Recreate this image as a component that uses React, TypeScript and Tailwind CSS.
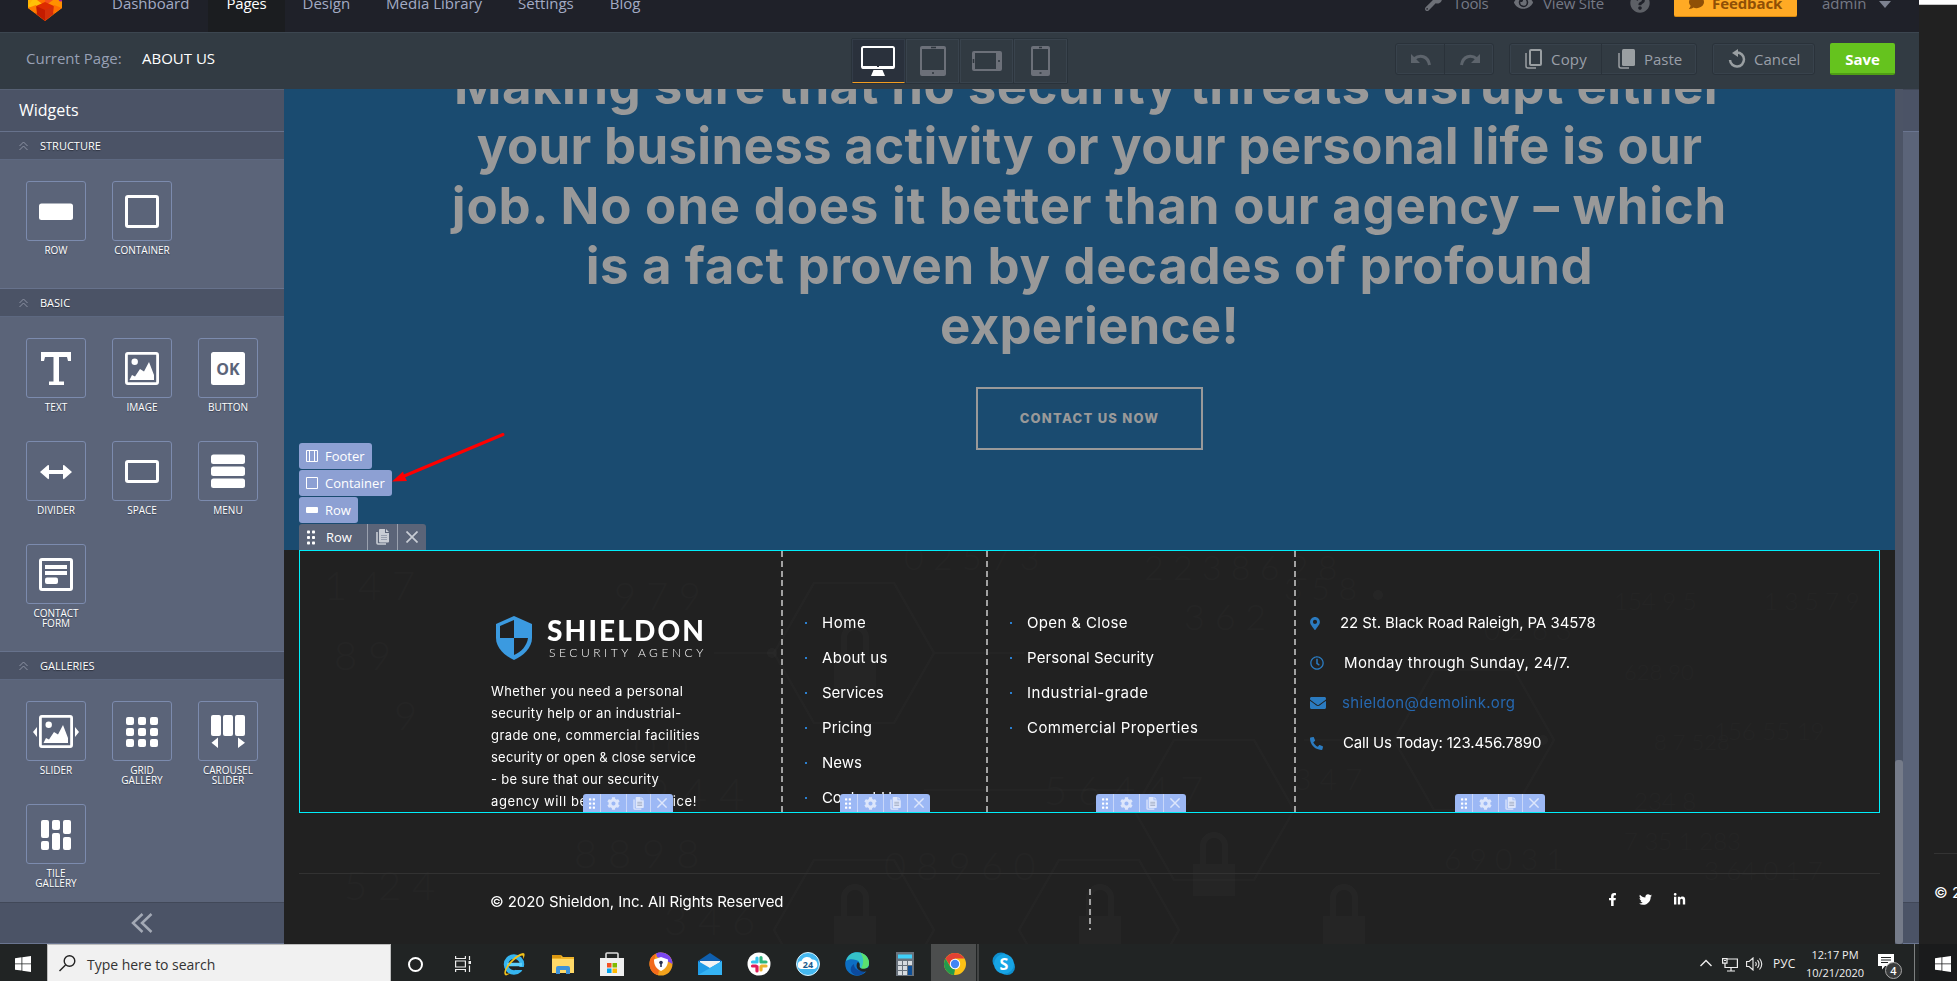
import React from "react";
import {
  FaMapMarkerAlt, FaRegClock, FaEnvelope, FaPhone, FaFacebookF, FaTwitter, FaLinkedinIn,
  FaCog, FaWrench, FaEye, FaComment, FaQuestionCircle,
} from "react-icons/fa";

const OPEN = "font-['Open_Sans','Noto_Sans',sans-serif]";
const GEO = "font-['Inter','Open_Sans',sans-serif]";

/* ---------- top bars ---------- */

function Logo() {
  return (
    <svg className="block" width="34" height="36" viewBox="0 0 34 36">
      <path d="M0 0h34v22L17 35 0 22z" fill="#ff9800" />
      <path d="M0 0h9v17L0 22z" fill="#ffb300" />
      <path d="M34 0h-9v17l9 5z" fill="#ff8f00" />
      <path d="M9 8l8 8-8 8-9-4z" fill="#ffc107" />
      <path d="M25 8l-8 8 8 8 9-4z" fill="#ff9100" />
      <path d="M9 14l8 6v-9z" fill="#ff6d00" />
      <path d="M25 14l-8 6v-9z" fill="#f4511e" />
      <path d="M8 20l9-4 9 4-9 15z" fill="#dd2c00" />
      <path d="M8 20l9 4v11L7 27z" fill="#c41c00" />
      <path d="M26 20l-9 4v11l10-8z" fill="#d32f0a" />
      <path d="M0 22l8-3 1 9z" fill="#ff7a00" />
      <path d="M34 22l-8-3-1 9z" fill="#ff6f00" />
      <circle cx="33" cy="13" r="2.5" fill="#a11d8f" />
    </svg>
  );
}

function Nav() {
  const tab = "flex h-full items-center px-[18px] pb-[3px]";
  return (
    <header className={`h-8 overflow-hidden bg-[#1f2129] text-[15px] leading-5 ${OPEN}`}>
      <div className="-mt-6 flex h-14 items-center text-[#a3abc4]">
        <div className="w-[94px] pl-7"><Logo /></div>
        <span className={tab}>Dashboard</span>
        <span className={`${tab} ml-[1px] bg-[#1b1d20] tracking-[-0.2px] text-white`}>Pages</span>
        <span className={tab}>Design</span>
        <span className={tab}>Media Library</span>
        <span className={tab}>Settings</span>
        <span className={tab}>Blog</span>
        <div className="ml-auto flex h-full items-center pr-[28px] pb-[3px] text-[#757985]">
          <FaWrench className="mr-[11px] h-[17px] w-[17px] text-[#6c6f76]" />
          <span className="w-[61px] tracking-[-0.4px]">Tools</span>
          <FaEye className="mr-[10px] h-[19px] w-[19px] text-[#6c6f76]" />
          <span className="w-[87px] tracking-[-0.16px]">View Site</span>
          <FaQuestionCircle className="mr-6 h-5 w-5 text-[#5d6066]" />
          <span className="mt-px mr-[25px] flex h-[27px] w-[123px] items-center rounded-[2px] border-b border-[#d98a10] bg-[#ffaa24] pl-[15px] font-bold tracking-[-0.1px] text-[#8f4f06]">
            <FaComment className="mr-2 h-[15px] w-[15px]" />Feedback
          </span>
          <span className="w-[57px]">admin</span>
          <span className="mt-1 h-0 w-0 border-x-[6px] border-t-[7px] border-x-transparent border-t-[#7d8290]" />
        </div>
      </div>
    </header>
  );
}

function Devices() {
  const cell = "flex h-[44px] w-[53px] items-center justify-center border border-[#39434d]";
  return (
    <div className="mt-[3px] flex w-[217px] gap-px rounded-[2px] border border-[#29323a] bg-[#2b333b]">
      <div className="flex h-[44px] w-[53px] items-center justify-center border border-b border-[#333c48] border-b-[#f39c1f] bg-[#2a313c]">
        <svg className="mr-px" width="34" height="32" viewBox="0 0 34 32">
          <rect x="1" y="2" width="32" height="21" rx="1.5" fill="none" stroke="#fff" strokeWidth="2" />
          <path d="M1 21h32v2.500H1z" fill="#fff" /><path d="M12.500 25h9l2.500 6H10z" fill="#fff" />
          <rect x="16" y="21" width="2" height="1" fill="#2a313c" />
        </svg>
      </div>
      <div className={`${cell} bg-[#313a42]`}>
        <svg width="26" height="30" viewBox="0 0 26 30">
          <path fillRule="evenodd" fill="#6c7079" d="M2 0h22a2 2 0 012 2v26a2 2 0 01-2 2H2a2 2 0 01-2-2V2a2 2 0 012-2zm0 3v21h22V3z" />
          <path d="M11 1.500h5M12 27h2" stroke="#2d353d" strokeWidth="1.500" />
        </svg>
      </div>
      <div className={`${cell} bg-[#313a42]`}>
        <svg width="30" height="20" viewBox="0 0 30 20">
          <path fillRule="evenodd" fill="#6c7079" d="M2 0h26a2 2 0 012 2v16a2 2 0 01-2 2H2a2 2 0 01-2-2V2a2 2 0 012-2zm1 2v16h21V2z" />
          <path d="M1.500 8v4M27 9v2" stroke="#2d353d" strokeWidth="1.500" />
        </svg>
      </div>
      <div className={`${cell} bg-[#313a42]`}>
        <svg width="19" height="30" viewBox="0 0 19 30">
          <path fillRule="evenodd" fill="#6c7079" d="M2 0h15a2 2 0 012 2v26a2 2 0 01-2 2H2a2 2 0 01-2-2V2a2 2 0 012-2zm0 3v21h15V3z" />
          <path d="M8 1.500h3M8.500 27h2" stroke="#2d353d" strokeWidth="1.500" />
        </svg>
      </div>
    </div>
  );
}

function Toolbar() {
  const group = "flex h-[32px] items-center rounded-[3px] border border-[#2a323a] shadow-[inset_0_0_0_1px_#38424c]";
  return (
    <div className={`grid h-[57px] grid-cols-[851px_217px_851px] items-center border-t border-[#3c4650] bg-[#323b43] pb-[4px] text-[15px] leading-5 text-[#9a9fa8] ${OPEN}`}>
      <div className="flex pl-[26px] pb-[2px]">
        <span className="w-[116px] text-[#98a0b5]">Current Page:</span>
        <span className="text-white">ABOUT US</span>
      </div>
      <Devices />
      <div className="flex items-center justify-end pr-6">
        <div className={`${group} mr-[15px] w-[99px]`}>
          <span className="flex h-full w-[49px] items-center justify-center border-r border-[#2a323a]">
            <svg className="ml-[3px]" width="20" height="13" viewBox="0 0 20 13"><path d="M3 6C9 1 17 3 18.500 12" fill="none" stroke="#5d646c" strokeWidth="3" /><path d="M0 1v9h9z" fill="#5d646c" /></svg>
          </span>
          <span className="flex h-full w-[49px] items-center justify-center">
            <svg className="ml-[2px]" width="20" height="13" viewBox="0 0 20 13"><path d="M17 6C11 1 3 3 1.500 12" fill="none" stroke="#5d646c" strokeWidth="3" /><path d="M20 1v9h-9z" fill="#5d646c" /></svg>
          </span>
        </div>
        <div className={`${group} mr-[15px] w-[188px]`}>
          <span className="flex h-full w-[92px] items-center gap-[9px] border-r border-[#2a323a] pl-[15px]">
            <svg width="17" height="20" viewBox="0 0 17 20" fill="none" stroke="#9a9fa2" strokeWidth="2"><rect x="5" y="1" width="11" height="15" rx="1" /><path d="M1 4v13q0 2 2 2h8" strokeWidth="1.500" /></svg>
            <span className="tracking-[0.2px]">Copy</span>
          </span>
          <span className="flex h-full items-center gap-[9px] pl-4">
            <svg width="17" height="20" viewBox="0 0 17 20"><rect x="4" y="0" width="13" height="17" rx="1.500" fill="#9a9fa2" /><path d="M1 4v13q0 2 2 2h8" fill="none" stroke="#9a9fa2" strokeWidth="1.500" /></svg>
            Paste
          </span>
        </div>
        <div className={`${group} mr-[15px] w-[103px] gap-2 pl-[15px]`}>
          <svg width="18" height="20" viewBox="0 0 18 20"><path d="M2 11a7 7 0 107-7.500" fill="none" stroke="#9a9fa2" strokeWidth="2.500" /><path d="M10 0v8L4 4z" fill="#9a9fa2" /></svg>
          Cancel
        </div>
        <div className="flex h-8 w-[65px] items-center justify-center rounded-[2px] border-b-2 border-[#4f9e15] bg-[#65c31e] pt-px font-bold text-white">Save</div>
      </div>
    </div>
  );
}

/* ---------- sidebar ---------- */

const pic = (
  <>
    <rect x="14.400" y="15.400" width="31.200" height="30.200" rx="1.500" fill="none" stroke="#fff" strokeWidth="2.800" />
    <circle cx="22.700" cy="23.700" r="3.200" />
    <path d="M17.500 42l2.500-5 3 1.500 5-7.500 4 2.500 5-9.500 5 13V42z" />
  </>
);

const art: Record<string, React.ReactNode> = {
  ROW: <rect x="13" y="22.500" width="34" height="16.500" rx="2.500" />,
  CONTAINER: <rect x="14.500" y="15.500" width="31" height="30" rx="1.500" fill="none" stroke="#fff" strokeWidth="3" />,
  TEXT: <path d="M15 14h30v9h-3l-1-4H33v24.500h5V47H23v-3.500h4.500V19H19l-1 4h-3z" />,
  IMAGE: pic,
  BUTTON: (
    <>
      <rect x="13" y="14" width="34" height="33" rx="2.500" />
      <text x="30" y="36.500" textAnchor="middle" fontSize="16" fontWeight="700" fontFamily="Open Sans" fill="#5b6479">OK</text>
    </>
  ),
  DIVIDER: <path d="M14 31l8-7q1-.5 1 1v4h14v-4q0-1.500 1-1l8 7-8 7q-1 .5-1-1v-4H23v4q0 1.500-1 1z" />,
  SPACE: <rect x="14.500" y="20.500" width="31" height="20" rx="1.500" fill="none" stroke="#fff" strokeWidth="3" />,
  MENU: <><rect x="13" y="13.500" width="34" height="9.500" rx="2.500" /><rect x="13" y="25.500" width="34" height="9.500" rx="2.500" /><rect x="13" y="37.500" width="34" height="9.500" rx="2.500" /></>,
  "CONTACT FORM": (
    <>
      <rect x="14.500" y="15.500" width="31" height="30" rx="1.500" fill="none" stroke="#fff" strokeWidth="3" />
      <path d="M19 21h22v4H19zM19 27h22v4H19z" /><rect x="19" y="33.500" width="13" height="6.500" rx="2" />
    </>
  ),
  SLIDER: <>{pic}<path d="M11 26v10l-4-5zM49 26v10l4-5z" /></>,
  "GRID GALLERY": <>{[14, 26, 38].map((x) => [16, 27, 38].map((y) => <rect key={x + "-" + y} x={x} y={y} width="8" height="8" rx="2" />))}</>,
  "CAROUSEL SLIDER": <><rect x="13" y="14" width="10" height="21" rx="2" /><rect x="25" y="14" width="10" height="21" rx="2" /><rect x="37" y="14" width="10" height="21" rx="2" /><path d="M20 36.500v10.500l-6.500-5.300zM40 36.500v10.500l7-5.300z" /></>,
  "TILE GALLERY": <><rect x="15" y="16" width="8" height="18" rx="2" /><rect x="15" y="37" width="8" height="9" rx="2" /><rect x="26" y="16" width="8" height="10" rx="2" /><rect x="26" y="29" width="8" height="17" rx="2" /><rect x="37" y="16" width="8" height="14" rx="2" /><rect x="37" y="33" width="8" height="13" rx="2" /></>,
};

function Widget({ name }: { name: string }) {
  return (
    <div className="h-[103px] w-[60px]">
      <div className="h-[60px] rounded-[3px] border border-[#7c8bae]">
        <svg className="-m-px block" width="60" height="60" viewBox="0 0 60 60" fill="#fff">{art[name]}</svg>
      </div>
      <div className="mt-1 flex flex-col items-center text-[10px] leading-[10px] text-white [text-shadow:0_1px_1px_#3a4152]">
        {name.split(" ").map((p) => <span key={p} className="whitespace-nowrap">{p}</span>)}
      </div>
    </div>
  );
}

function Section({ title, items, className }: { title: string; items: string[]; className: string }) {
  return (
    <section className={`overflow-hidden ${className}`}>
      <div className="flex h-[29px] items-center border-t border-b border-t-[#67728c] border-b-[#5d6880] bg-[#4b5366] pl-[19px] text-[11px] leading-4 text-white [text-shadow:0_1px_1px_#2b303d]">
        <svg className="mr-[12px]" width="9" height="10" viewBox="0 0 9 10" fill="none" stroke="#8d93a3" strokeWidth="1"><path d="M.5 5l4-4 4 4M.5 9l4-4 4 4" /></svg>
        {title}
      </div>
      <div className="flex flex-wrap gap-x-[26px] pt-[21px] pl-[26px]">
        {items.map((i) => <Widget key={i} name={i} />)}
      </div>
    </section>
  );
}

function Sidebar() {
  return (
    <aside className={`flex w-[284px] flex-col bg-[#5b6479] ${OPEN}`}>
      <h2 className="h-[42px] border-t border-[#566073] bg-[#4b5366] pt-[8px] pl-[19px] text-[16px] leading-6 text-white">Widgets</h2>
      <Section title="STRUCTURE" items={["ROW", "CONTAINER"]} className="h-[157px]" />
      <Section title="BASIC" items={["TEXT", "IMAGE", "BUTTON", "DIVIDER", "SPACE", "MENU", "CONTACT FORM"]} className="h-[363px]" />
      <Section title="GALLERIES" items={["SLIDER", "GRID GALLERY", "CAROUSEL SLIDER", "TILE GALLERY"]} className="h-[251px]" />
      <div className="flex h-[42px] items-center justify-center border-t border-b border-t-[#414858] border-b-[#6a7590] bg-[#4b5366]">
        <svg width="22" height="20" viewBox="0 0 22 20" fill="none" stroke="#a3a9b5" strokeWidth="2.500"><path d="M11.500 1L2 10l9.500 9M20.500 1L11 10l9.500 9" /></svg>
      </div>
    </aside>
  );
}

/* ---------- canvas ---------- */

function Dots({ className }: { className: string }) {
  return (
    <svg className={className} viewBox="0 0 8 14" fill="#fff">
      {[0, 5].map((x) => [0, 5.5, 11].map((y) => <rect key={x + "-" + y} x={x} y={y} width="3" height="3" rx=".8" />))}
    </svg>
  );
}
function CopyIcon({ className }: { className: string }) {
  return (
    <svg className={className} viewBox="0 0 13 16">
      <path d="M4 0h5v4h4v8.500a1 1 0 01-1 1H4a1 1 0 01-1-1V1a1 1 0 011-1zM10 0l3 3h-3z" fill="currentColor" />
      <path d="M1 3v11q0 1 1 1h8" fill="none" stroke="currentColor" strokeWidth="1.600" />
      <path d="M5 6.500h6M5 8.500h6M5 10.500h6" stroke="#6d778c" strokeOpacity=".6" strokeWidth=".9" />
    </svg>
  );
}
function Cross({ className }: { className: string }) {
  return <svg className={className} viewBox="0 0 12 12" stroke="currentColor" strokeWidth="1.700"><path d="M.5.5l11 11M11.500.5l-11 11" /></svg>;
}

function ColumnTools() {
  return (
    <div className="absolute bottom-0 left-1/2 flex h-[18px] w-[90px] -translate-x-1/2 items-center rounded-t-[3px] bg-[#9cb8f5] text-[#dde6fb]">
      <span className="flex h-full w-[18px] items-center justify-center border-r border-[#c9d7f9]"><Dots className="h-[11px] w-[6px]" /></span>
      <span className="flex h-full w-[26px] items-center justify-center border-r border-[#c9d7f9]"><FaCog className="h-[13px] w-[13px]" /></span>
      <span className="flex h-full w-[24px] items-center justify-center border-r border-[#c9d7f9]"><CopyIcon className="h-[13px] w-[11px]" /></span>
      <span className="flex h-full flex-1 items-center justify-center"><Cross className="h-[10px] w-[10px]" /></span>
    </div>
  );
}

const DASH = "w-[2px] shrink-0 bg-[repeating-linear-gradient(180deg,#a2a2a2_0_6px,transparent_6px_9.8px)]";

function Menu({ items }: { items: [string, string][] }) {
  return (
    <ul className="pt-[54px] text-[15px] leading-[35px] text-white">
      {items.map(([t, c]) => (
        <li key={t} className="flex items-center">
          <span className="mr-[15px] h-[2px] w-[2px] bg-[#2a7fd0]" />
          <span className={`whitespace-nowrap ${c}`}>{t}</span>
        </li>
      ))}
    </ul>
  );
}

function Backdrop() {
  const lock = "M-14-6v-18a14 14 0 0128 0v18h7v32h-42v-32zM-8-6H8v-18a8 8 0 00-16 0z";
  const hex = "M-40 70l-40-70 40-70h80l40 70-40 70z";
  const nums: [number, number, string, number][] = [
    [40, 50, "1 4 7", 40], [50, 120, "8 9", 40], [110, 180, "9", 40], [330, 60, "9 7 9", 38], [350, 210, "0 0", 38],
    [360, 260, "9 4 4", 44], [290, 318, "8 8 9 8", 40], [380, 385, "3 4 6", 40], [620, 20, "0 2 5 7 3", 34], [860, 30, "2 2 3 8 6 2 8", 34],
    [900, 80, "3 6 2", 36], [1000, 50, "3 5 8", 32], [760, 255, "5 6 4 4 7", 40], [1010, 240, "3 4 7", 30], [1330, 60, "154 9 5", 24],
    [1340, 130, "628 90", 22], [1370, 200, "8 7 528", 22], [1350, 260, "234 8", 24], [1200, 90, "0 2 6 3", 28], [1480, 60, "1 3 5 7 9", 24],
    [1340, 300, "7 35 1 283", 24], [1430, 190, "156  55 19", 24], [1420, 330, "3 64  0 1 7", 26], [60, 350, "5 2 4", 40], [600, 330, "0 8 9 6 0", 38], [1160, 320, "6 9 0 3 1", 30],
  ];
  return (
    <svg className="absolute inset-0" width="1611" height="394" viewBox="0 0 1611 394" fill="#fff" aria-hidden="true">
      <g opacity=".013" fontFamily="Lato" fontWeight="300">
        {nums.map(([x, y, t, s], i) => <text key={i} x={x} y={y} fontSize={s}>{t}</text>)}
      </g>
      <g opacity=".018" fill="none" stroke="#fff" strokeWidth="2.500">
        <path d={hex} transform="translate(570 103)" /><path d={hex} transform="translate(930 260)" />
        <path d={hex} transform="translate(570 380)" /><path d={hex} transform="translate(815 380)" />
        <path d={hex} transform="translate(1190 190)" />
        <path d="M430 103h60M1020 190h90M650 103h90M640 240h210" />
      </g>
      <g opacity=".022">
        <path d={lock} transform="translate(571 112)" /><path d={lock} transform="translate(571 372)" />
        <path d={lock} transform="translate(816 372)" /><path d={lock} transform="translate(930 320)" />
        <path d={lock} transform="translate(1060 372)" />
        <circle cx="488" cy="103" r="5" /><circle cx="1094" cy="45" r="5" /><circle cx="1259" cy="190" r="5" />
      </g>
    </svg>
  );
}

function FooterRow() {
  return (
    <div className="absolute top-0 left-[15px] flex h-[263px] w-[1581px] border border-[#00eefa]">
      <div className="relative w-[481px] pl-[191px]">
        <div className="mt-[65px] flex pl-[5px]">
          <svg className="mr-[14px]" width="37" height="44" viewBox="0 0 37 44">
            <path d="M18 0l18 8v14c0 10-9 18-18 22C9 40 0 32 0 22V8z" fill="#3b9ae0" />
            <path d="M18 4v18H4V10zM18 22h14c-1 8-7 14-14 17z" fill="#212121" />
          </svg>
          <div className="-mt-px font-['Lato','Open_Sans',sans-serif] text-white">
            <div className="h-[29px] text-[28px] leading-[31px] font-black tracking-[2.150px]">SHIELDON</div>
            <div className="pl-[2px] text-[12px] leading-[18px] font-light tracking-[3.550px]">SECURITY AGENCY</div>
          </div>
        </div>
        <p className="mt-[18px] text-[13px] leading-[22px] whitespace-nowrap text-white">
          <span className="tracking-[0.42px]">Whether you need a personal</span><br />
          <span className="tracking-[0.32px]">security help or an industrial-</span><br />
          <span className="tracking-[0.43px]">grade one, commercial facilities</span><br />
          <span className="tracking-[0.23px]">security or open &amp; close service</span><br />
          <span className="tracking-[0.3px]">- be sure that our security</span><br />
          <span className="tracking-[0.63px]">agency will be at your service!</span>
        </p>
        <div className="absolute bottom-0 left-[283px] h-[18px] w-[90px]"><ColumnTools /></div>
      </div>
      <div className={DASH} />
      <div className="relative w-[203px] pl-[22px]">
        <Menu items={[["Home", "tracking-[0.6px]"], ["About us", "tracking-[0.3px]"], ["Services", "tracking-[0px]"], ["Pricing", "tracking-[0.1px]"], ["News", "tracking-[0px]"], ["Contact Us", "tracking-[-0.1px]"]]} />
        <ColumnTools />
      </div>
      <div className={DASH} />
      <div className="relative w-[306px] pl-[22px]">
        <Menu items={[["Open & Close", "tracking-[0.36px]"], ["Personal Security", "tracking-[0.13px]"], ["Industrial-grade", "tracking-[0.5px]"], ["Commercial Properties", "tracking-[0.45px]"]]} />
        <ColumnTools />
      </div>
      <div className={DASH} />
      <div className="flex flex-1 flex-col pt-[52px] pl-[14px] text-[15px] leading-10 text-white">
        <div className="flex items-center"><FaMapMarkerAlt className="mr-[20px] h-[13px] w-[10px] text-[#2b7bc0]" /><span className="tracking-[-0.07px]">22 St. Black Road Raleigh, PA 34578</span></div>
        <div className="flex items-center"><FaRegClock className="mr-[20px] h-[14px] w-[14px] text-[#2b7bc0]" /><span className="tracking-[0.34px]">Monday through Sunday, 24/7.</span></div>
        <div className="flex items-center"><FaEnvelope className="mr-[16px] h-[16px] w-[16px] text-[#2b7bc0]" /><span className="tracking-[0.32px] text-[#2668b0]">shieldon@demolink.org</span></div>
        <div className="flex items-center"><FaPhone className="mr-[20px] h-[13px] w-[13px] -scale-x-100 text-[#2b7bc0]" /><span className="tracking-[-0.16px]">Call Us Today: 123.456.7890</span></div>
      </div>
      <div className="absolute bottom-0 left-[1155px] h-[18px] w-[90px]"><ColumnTools /></div>
    </div>
  );
}

function Tags() {
  const tag = "flex h-[26px] items-center rounded-[3px] bg-[#8da0d3] pl-[7px]";
  return (
    <div className={`absolute top-[354px] left-[15px] flex flex-col items-start gap-px text-[13px] leading-[18px] text-white ${OPEN}`}>
      <div className={`${tag} w-[73px]`}>
        <svg className="mr-[7px]" width="12" height="12" viewBox="0 0 12 12" fill="none" stroke="#fff"><path d="M.5.5h11v11H.5zM3.500.5v11M8.500.5v11" /></svg>Footer
      </div>
      <div className={`${tag} w-[93px]`}>
        <svg className="mr-[7px]" width="12" height="12" viewBox="0 0 12 12" fill="none" stroke="#fff"><path d="M.5.5h11v11H.5z" /></svg>Container
      </div>
      <div className={`${tag} w-[59px]`}><span className="mr-[7px] h-[6px] w-3 rounded-[1px] bg-white" />Row</div>
      <div className="flex h-[26px] w-[127px] items-center rounded-t-[3px] bg-[#5b6478] text-[#c9cdd5]">
        <span className="flex h-full w-[69px] items-center border-r border-[#99a0ae] pl-2 text-white"><Dots className="mr-[11px] h-[15px] w-[8px]" />Row</span>
        <span className="flex h-full w-[30px] items-center justify-center border-r border-[#99a0ae]"><CopyIcon className="h-4 w-[13px]" /></span>
        <span className="flex h-full flex-1 items-center justify-center"><Cross className="h-3 w-3" /></span>
      </div>
    </div>
  );
}

function Canvas() {
  return (
    <main className={`relative flex w-[1611px] flex-col overflow-hidden bg-[#212121] ${GEO}`}>
      <section className="flex h-[461px] shrink-0 flex-col items-center bg-[#1a4b70]">
        <h1 className="-mt-[33px] text-center text-[51px] leading-[60px] font-bold whitespace-nowrap text-[#999]">
          <span className="tracking-[0.44px]">Making sure that no security threats disrupt either</span><br />
          <span className="tracking-[0.3px]">your business activity or your personal life is our</span><br />
          <span className="tracking-[0.78px]">job. No one does it better than our agency – which</span><br />
          <span className="tracking-[0.6px]">is a fact proven by decades of profound</span><br />
          <span className="tracking-[0.25px]">experience!</span>
        </h1>
        <div className="mt-[31px] flex h-[63px] w-[227px] items-center justify-center border-2 border-[#999] text-[13px] font-extrabold tracking-[1.250px] text-[#999]">CONTACT US NOW</div>
      </section>
      <footer className="relative flex h-[394px] flex-col justify-end">
        <Backdrop />
        <FooterRow />
        <div className="relative mx-[15px] flex h-[71px] items-start border-t border-[#323232] text-white">
          <div className="w-[790px] pt-[18px] pl-[191px] text-[15px] leading-5 tracking-[-0.070px]">© 2020 Shieldon, Inc. All Rights Reserved</div>
          <div className={`mt-[15px] h-[41px] ${DASH}`} />
          <div className="flex items-center gap-[21px] pt-[19px] pl-[516px]">
            <FaFacebookF className="h-[13px] w-[11px]" /><FaTwitter className="h-[13px] w-[13px]" /><FaLinkedinIn className="h-[13px] w-[13px]" />
          </div>
        </div>
      </footer>
      <Tags />
      <svg className="absolute top-[340px] left-[105px]" width="120" height="56" viewBox="0 0 120 56">
        <path d="M114 5.500L14 47.500" stroke="#fe0000" strokeWidth="3" strokeLinecap="round" /><path d="M3 52.500l11-10 1 3.500 3 6z" fill="#fe0000" />
      </svg>
    </main>
  );
}

/* ---------- taskbar ---------- */

function Windows() {
  return <svg width="16" height="16" viewBox="0 0 16 16" fill="#fff"><path d="M0 2.200l6.500-.9v6.200H0zM7.300 1.200L16 0v7.500H7.300zM0 8.300h6.500v6.300L0 13.700zM7.300 8.300H16V16l-8.700-1.200z" /></svg>;
}

const apps: [string, string, React.ReactNode][] = [
  ["ie", "w-12", <><circle cx="12" cy="12.500" r="8" fill="none" stroke="#35b5f0" strokeWidth="4.500" /><path d="M5 12.500h15" stroke="#5fd0fa" strokeWidth="3.500" /><path d="M14 15h9v3h-9z" fill="#212424" /><path d="M3 23C-1 18 13 2 21 1c3 0 1 5 0 6 1-5-2-4-6-1C9 10 3 18 4 21c1 2 4 0 5-.5C6 23 4 24 3 23z" fill="#f3c21a" /></>],
  ["files", "w-[49px]", <><path d="M1 3h9l2 2h11v16H1z" fill="#f0b429" /><path d="M1 7h22v14H1z" fill="#ffd968" /><path d="M1 3h9v3H1z" fill="#d99611" /><path d="M5 22v-6q0-2 2-2h10q2 0 2 2v6h-4v-4H9v4z" fill="#3f93d9" /></>],
  ["store", "w-[49px]", <><path d="M6 8V2q0-1 1-1h10q1 0 1 1v6" fill="none" stroke="#ddd" strokeWidth="1.600" /><path d="M0 6h24v18H0z" fill="#efefef" /><path d="M7 11h4.500v4.500H7z" fill="#f25022" /><path d="M12.500 11H17v4.500h-4.500z" fill="#7fba00" /><path d="M7 16.500h4.500V21H7z" fill="#00a4ef" /><path d="M12.500 16.500H17V21h-4.500z" fill="#ffb900" /></>],
  ["secure", "w-[49px]", <><circle cx="12" cy="12" r="11.500" fill="#f2a21c" /><path d="M7 1.500A11.500 11.500 0 0123.500 12L18 9 8 5z" fill="#7b47f0" /><path d="M7 1.500A11.500 11.500 0 009 23l1-5-5-8z" fill="#f26a1b" /><path d="M12 5l7 2.500c0 6-2 9-7 11.500-5-2.500-7-5.500-7-11.500z" fill="#fff" /><circle cx="12" cy="10.500" r="1.800" fill="#27304f" /><path d="M11.200 11h1.600v4h-1.600z" fill="#27304f" /></>],
  ["mail", "w-[49px]", <><path d="M0 9l12-8 12 8v3H0z" fill="#0f5fae" /><path d="M2 9h20v8H2z" fill="#f4f4f4" /><path d="M0 9l12 7 12-7v14H0z" fill="#1f9be6" /><path d="M0 23L24 9v14z" fill="#35b3f3" /></>],
  ["slack", "w-[49px]", <><circle cx="12" cy="12" r="11.500" fill="#fff" /><g strokeWidth="3.200" strokeLinecap="round"><path d="M10 6v3.500M5.500 10H10" stroke="#36c5f0" /><path d="M14 5.500V10M15 10h4" stroke="#2eb67d" /><path d="M14 14.500V18M14.500 14H19" stroke="#ecb22e" /><path d="M10 14.500V19M5.500 14H9" stroke="#e01e5a" /></g></>],
  ["portal", "w-[49px]", <><circle cx="12" cy="12" r="11.500" fill="#45b8f0" stroke="#d9f2fd" /><path d="M6 17a4 4 0 01-.5-8A6 6 0 0116 7.500 5 5 0 0118.500 17z" fill="#fff" /><text x="12" y="15.500" textAnchor="middle" fontSize="9" fontWeight="700" fontFamily="Open Sans" fill="#1c5a8c">24</text></>],
  ["edge", "w-[49px]", <><circle cx="12" cy="12" r="11.800" fill="#0d6fc4" /><path d="M1 9C3 2 8 0 12.500.2 19 .5 24 5 24 11c0 4-3 6-6 6s-5-1-4-3 1-5-3-6-7-1-10 1z" fill="#35c1c9" /><path d="M15 .6C20 2 24 6 24 11c0 4-3 6-6 6l-2-.5C19 12 19 5 15 .6z" fill="#5be06e" /><path d="M9 12c0 5 4 8 12 6-3 5-8 6-11 5-5-2-6-8-1-11z" fill="#0b4a9e" /><path d="M13 10c3 2 1 4 2 5.500 1 1.500 4 2 8.500 0V19q-6 2-9.500-1c-3-2-3-6-1-8z" fill="#212424" /></>],
  ["calc", "w-[48px]", <><path d="M3 0h18v24H3z" fill="#69727c" /><path d="M5 2.500h14v4H5z" fill="#3fd0fa" /><path d="M5 9h4v4H5zM10 9h4v4h-4zM15 9h4v4h-4zM5 14h4v4H5zM10 14h4v4h-4zM5 19h4v4H5zM10 19h4v4h-4z" fill="#d6dbe0" /><path d="M15 14h4v9h-4z" fill="#0d4e96" /></>],
];

function Taskbar() {
  const cell = "flex h-full items-center justify-center";
  return (
    <div className={`flex h-[37px] items-center bg-[#212424] text-[#f0f0f0] ${OPEN}`}>
      <span className={`${cell} w-[47px] pt-[3px] pr-px`}><Windows /></span>
      <div className="flex h-full w-[344px] items-center border border-b-0 border-[#bdbdbd] bg-[#f1f1f1] pl-[11px] text-[14px] tracking-[-0.03px] text-[#333]">
        <svg className="mr-[11px]" width="17" height="17" viewBox="0 0 17 17" fill="none" stroke="#222" strokeWidth="1.400"><circle cx="10.500" cy="6" r="5.300" /><path d="M6.500 10L.5 16" /></svg>
        <span className="pt-[2px]">Type here to search</span>
      </div>
      <span className={`${cell} w-12 pt-1`}><span className="h-[15px] w-[15px] rounded-full border-2 border-white" /></span>
      <span className={`${cell} w-12 pt-[3px]`}>
        <svg width="16" height="16" viewBox="0 0 16 16" fill="none" stroke="#eee" strokeWidth="1.200"><path d="M.6 0v2.500h9.800V0M.6 16v-2.500h9.800V16M.6 5h9.800v6H.6zM14.500 0v4M14.500 9.500V16" /><path d="M13.500 5h2.500v3h-2.500z" fill="#eee" stroke="none" /></svg>
      </span>
      <span className="w-[3px]" />
      {apps.map(([id, w, g]) => (
        <span key={id} className={`${cell} pt-[3px] ${w}`}><svg width="24" height="24" viewBox="0 0 24 24">{g}</svg></span>
      ))}
      <span className={`${cell} ml-[2px] w-[45px] bg-[#4c4e4e] pt-[3px] pl-[2px]`}>
        <svg width="24" height="24" viewBox="0 0 24 24">
          <circle cx="12" cy="12" r="11" fill="#fbc116" /><path d="M2.500 6.500A11 11 0 0121.500 6.500H12L7.500 14.500z" fill="#e24134" />
          <path d="M2.500 6.500L7.300 14.800 12 17.400 11 23A11 11 0 012.500 6.500z" fill="#229a4e" />
          <circle cx="12" cy="12" r="5.200" fill="#fff" /><circle cx="12" cy="12" r="4.200" fill="#4285f4" />
        </svg>
      </span>
      <span className="h-full w-[3px] border-l border-[#212424] bg-[#434545]" />
      <span className={`${cell} w-[49px] pt-[3px]`}>
        <svg width="24" height="24" viewBox="0 0 24 24"><circle cx="9" cy="9" r="8.500" fill="#0f8fce" /><circle cx="15" cy="15" r="8" fill="#0f8fce" /><circle cx="12" cy="12" r="10" fill="#17a5e6" /><text x="12" y="17.500" textAnchor="middle" fontSize="16" fontWeight="700" fontFamily="Open Sans" fill="#fff">S</text></svg>
      </span>
      <div className="ml-auto flex h-full items-center">
        <svg className="mr-[10px]" width="12" height="8" viewBox="0 0 12 8" fill="none" stroke="#eee" strokeWidth="1.400"><path d="M.5 7L6 1.500 11.500 7" /></svg>
        <svg className="mr-[8px] mt-[4px]" width="16" height="14" viewBox="0 0 16 14" fill="none" stroke="#eee" strokeWidth="1.200"><path d="M5 1h10.400v8.500H3V5.500M9 10v3M5 13h8M.6.6H5v4.500H.6zM2 2.500h2" /></svg>
        <svg className="mr-[10px] mt-[3px]" width="17" height="14" viewBox="0 0 17 14" fill="none" stroke="#eee" strokeWidth="1.100"><path d="M.6 4.500h2.500L7 1v12L3.100 9.500H.6zM9.500 5q1.500 2 0 4M11.500 3.200q3 3.800 0 7.600M13.500 1.500q4.500 5.500 0 11" /></svg>
        <span className="w-[33px] pt-[3px] text-[12px]">РУС</span>
        <div className="w-[58px] pt-[2px] text-center text-[11px] leading-[18px] tracking-[-0.05px]"><div>12:17 PM</div><div>10/21/2020</div></div>
        <div className="relative ml-[14px] h-6 w-6 pt-px">
          <svg className="mt-[2px] block" width="16" height="16" viewBox="0 0 16 16"><path d="M0 0h16v12H7l-3 3.500V12H0z" fill="#fff" /><path d="M3 3.500h10M3 6h10M3 8.500h7" stroke="#212424" /></svg>
          <span className="absolute top-[11px] left-[7px] flex h-[17px] w-[17px] items-center justify-center rounded-full border border-[#a8a8a8] bg-[#3a3c3c] text-[11px] leading-none font-semibold text-white">4</span>
        </div>
        <span className="ml-[12px] h-full w-px bg-[#7d8080]" />
        <span className="h-full w-1" />
        <span className="flex h-full w-[38px] items-center bg-[#1a1b1c] pt-[3px] pl-4"><Windows /></span>
      </div>
    </div>
  );
}

export default function App() {
  return (
    <div className="h-[981px] w-[1957px] overflow-hidden bg-[#212121]">
      <div className="flex h-[944px]">
        <div className="flex w-[1919px] flex-col">
          <Nav />
          <Toolbar />
          <div className="flex h-[855px]">
            <Sidebar />
            <Canvas />
            <div className="flex w-2 flex-col justify-end bg-[#4c5466]"><div className="h-[184px] rounded-[3px] bg-[#757b89]" /></div>
            <div className="flex w-4 flex-col bg-[#4b5366]">
              <div className="h-[42px] border-t border-[#414858]" />
              <div className="h-[771px] border-t border-[#6a7590] bg-[#5b6479]" />
              <div className="flex-1 border-t border-b border-t-[#414858] border-b-[#6a7590]" />
            </div>
          </div>
        </div>
        <div className={`flex w-[38px] flex-col overflow-hidden text-[15px] text-white ${GEO}`}>
          <div className="h-[5px] border-b border-[#c8c8c8] bg-white" />
          <div className="mt-[848px] ml-[15px] border-t border-[#333] pt-[29px] leading-5 whitespace-nowrap">© 2</div>
        </div>
      </div>
      <Taskbar />
    </div>
  );
}
